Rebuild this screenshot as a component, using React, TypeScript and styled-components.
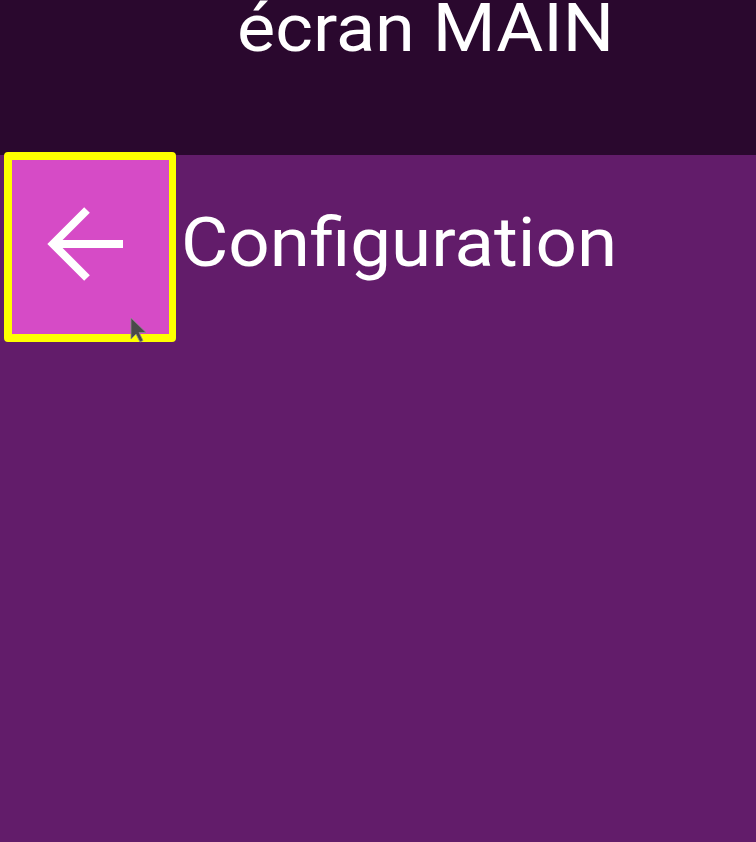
import React from "react";
import styled, { createGlobalStyle } from "styled-components";

const Global = createGlobalStyle`
  html, body { margin: 0; padding: 0; background: #621c6a; }
  body { font-family: Roboto, "Noto Sans", sans-serif; overflow: hidden; }
`;

const Screen = styled.div`
  width: 756px;
  height: 842px;
  display: flex;
  flex-direction: column;
  background: #621c6a;
  overflow: hidden;
`;

const Header = styled.header`
  height: 155px;
  flex: none;
  background: #2a082e;
  display: flex;
  align-items: flex-start;
  padding-left: 237px;
  box-sizing: border-box;
`;

const HeaderTitle = styled.h1`
  margin: -5px 0 0 0;
  font-family: Roboto, sans-serif;
  font-weight: 400;
  font-size: 67px;
  line-height: 1;
  color: #ffffff;
  white-space: nowrap;
  transform: scaleX(1.075);
  transform-origin: left center;
`;

const TopRow = styled.div`
  display: flex;
  align-items: flex-start;
  margin-top: -3px;
  padding-left: 4px;
`;

const FocusRing = styled.div`
  position: relative;
  border: 8px solid #ffff00;
  border-right-width: 7px;
  border-radius: 4px;
  flex: none;
`;

const BackButton = styled.button`
  width: 157px;
  height: 174px;
  background: #d64bc6;
  border: none;
  padding: 0;
  margin: 0;
  display: flex;
  align-items: center;
  justify-content: flex-start;
  padding-left: 33px;
  padding-bottom: 4px;
  box-sizing: border-box;
  cursor: pointer;
`;

const Pointer = styled.svg`
  position: absolute;
  left: 118px;
  top: 157px;
`;

const Title = styled.h2`
  margin: 56px 0 0 5px;
  font-family: Roboto, sans-serif;
  font-weight: 400;
  font-size: 69px;
  line-height: 1;
  color: #ffffff;
  white-space: nowrap;
  transform: scaleX(1.054);
  transform-origin: left center;
`;

export default function App() {
  return (
    <>
      <Global />
      <Screen>
        <Header>
          <HeaderTitle>écran MAIN</HeaderTitle>
        </Header>
        <TopRow>
          <FocusRing>
            <BackButton aria-label="Retour">
              <svg width="80" height="80" viewBox="0 0 80 80" fill="none">
                <path
                  d="M78 39H8 M42 5L8 39l34 34"
                  stroke="#ffffff"
                  strokeWidth="8"
                  strokeLinecap="butt"
                  strokeLinejoin="miter"
                />
              </svg>
            </BackButton>
            <Pointer width="18" height="26" viewBox="0 0 18 26">
              <path d="M1 1v21l5-5 4 8 3-1.5-4-8h7z" fill="#4a4a4a" stroke="#8a8a8a" strokeWidth="0.8" />
            </Pointer>
          </FocusRing>
          <Title>Configuration</Title>
        </TopRow>
      </Screen>
    </>
  );
}
